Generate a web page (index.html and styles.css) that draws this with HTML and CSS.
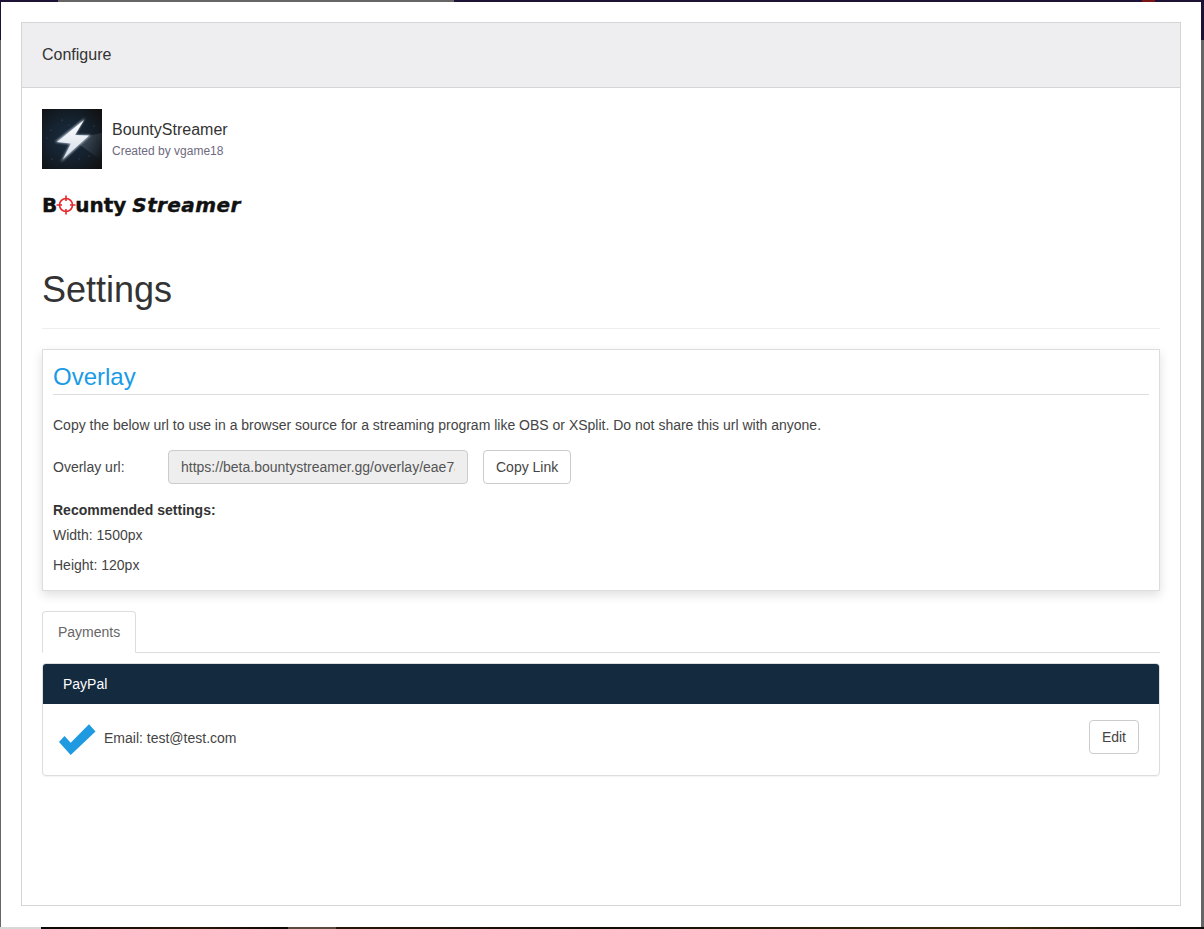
FILE: index.html
```html
<!DOCTYPE html>
<html lang="en">
<head>
  <meta charset="UTF-8" />
  <title>Configure</title>
  <link rel="stylesheet" href="styles.css">
</head>
<body>
  <div class="modal">
    <div class="config-panel">
      <div class="config-head">Configure</div>
      <div class="config-body">
        <!-- Extension info -->
        <div class="ext-info">
          <svg class="ext-icon" width="60" height="60" viewBox="0 0 60 60">
            <defs>
              <radialGradient id="sky" cx="0.45" cy="0.5" r="0.7">
                <stop offset="0" stop-color="#1c2e40" />
                <stop offset="0.55" stop-color="#14202c" />
                <stop offset="1" stop-color="#111111" />
              </radialGradient>
              <linearGradient id="beam" x1="0.4" y1="0.5" x2="1" y2="0.8">
                <stop offset="0" stop-color="#7d8790" stop-opacity="0.3" />
                <stop offset="1" stop-color="#7d8790" stop-opacity="0" />
              </linearGradient>
              <linearGradient id="bolt" x1="0" y1="0" x2="0" y2="1">
                <stop offset="0" stop-color="#ffffff" />
                <stop offset="1" stop-color="#d3dde6" />
              </linearGradient>
              <filter id="glow" x="-30%" y="-30%" width="160%" height="160%">
                <feGaussianBlur stdDeviation="1.200" />
              </filter>
            </defs>
            <rect width="60" height="60" fill="url(#sky)" />
            <path d="M30 30 L60 24 L60 52 Z" fill="url(#beam)" />
            <g fill="#4d5b68">
              <circle cx="20" cy="11" r="0.6" />
              <circle cx="9" cy="21" r="0.6" />
              <circle cx="27" cy="16" r="0.5" />
              <circle cx="52" cy="17" r="0.6" />
              <circle cx="5" cy="29" r="0.5" />
              <circle cx="10" cy="50" r="0.6" />
              <circle cx="47" cy="47" r="0.6" />
              <circle cx="37" cy="50" r="0.5" />
              <circle cx="48" cy="32" r="0.5" />
            </g>
            <path d="M43 9 L13 33 L28 35 L19 53 L49 26 L33 26 Z" fill="#aebccb" filter="url(#glow)" />
            <path d="M42 11 L15 33 L29 34.500 L21 50 L47 26.500 L33 26 Z" fill="url(#bolt)" />
          </svg>
          <div class="ext-text">
            <div class="ext-name">BountyStreamer</div>
            <div class="ext-author">Created by vgame18</div>
          </div>
        </div>

        <div class="logo">
          <span>B</span>
          <svg class="logo-target" width="20" height="20" viewBox="0 0 20 20">
            <circle cx="10" cy="10" r="6.500" fill="none" stroke="#e8262a" stroke-width="1.600" />
            <path d="M10 0.500V6M10 14V19.500M0.500 10H6M14 10H19.500" stroke="#e8262a" stroke-width="1.600" />
          </svg>
          <span>unty</span>
          <span class="logo-second">Streamer</span>
        </div>

        <h1 class="page-title">Settings</h1>

        <!-- Overlay box -->
        <section class="overlay-box">
          <h3 class="overlay-title">Overlay</h3>
          <p class="overlay-desc">Copy the below url to use in a browser source for a streaming program like OBS or XSplit. Do not share this url with anyone.</p>
          <div class="url-row">
            <label class="url-label" for="overlay-url">Overlay url:</label>
            <input class="url-input" id="overlay-url" type="text" disabled value="https://beta.bountystreamer.gg/overlay/eae7a1c04b">
            <button class="btn" type="button">Copy Link</button>
          </div>
          <div class="rec-title">Recommended settings:</div>
          <p class="rec-line">Width: 1500px</p>
          <p class="rec-line">Height: 120px</p>
        </section>

        <!-- Tabs -->
        <ul class="tabs">
          <li class="tab">Payments</li>
        </ul>

        <div class="pay-card">
          <div class="pay-head">PayPal</div>
          <div class="pay-body">
            <svg class="check" width="38" height="32" viewBox="0 0 38 32">
              <path d="M1 18 L6.500 12 L12.700 18.700 L31 0.300 L37.500 7.500 L12.700 31 Z" fill="#1f9ae0" />
            </svg>
            <span class="pay-email">Email: test@test.com</span>
            <button class="btn btn-edit" type="button">Edit</button>
          </div>
        </div>
      </div>
    </div>
  </div>
</body>
</html>
```

FILE: styles.css
```css
/* Base styles */
html, body {
  height: 100%;
}
body {
  margin: 0;
  overflow: hidden;
  font-family: "Liberation Sans", Arial, sans-serif;
  font-size: 14px;
  line-height: 20px;
  color: #444;
  /* what shows of the page behind the modal, along the window edges */
  background:
    linear-gradient(90deg, #1c1236 58px, #666 58px, #666 454px, #1c1236 454px, #1c1236 1142px, #7a1414 1142px, #7a1414 1155px, #1c1236 1155px) top / 100% 2px no-repeat,
    linear-gradient(90deg, #d8d8d8 41px, #0c0805 41px, #2a1608 200px, #0c0805 288px, #5a4a40 288px, #5a4a40 336px, #2a1608 336px, #100c06 600px, #3a2c08 1000px, #0c0805 1150px) bottom / 100% 2px no-repeat,
    linear-gradient(#1c1236 40px, #666 40px);
  padding: 2px 3px 2px 1px;
  box-sizing: border-box;
}
.modal {
  height: 100%;
  background: #fff;
  padding: 20px;
  box-sizing: border-box;
}
/* Configure panel */
.config-panel {
  height: 884px;
  border: 1px solid #d5d5d8;
  box-sizing: border-box;
}
.config-head {
  height: 65px;
  padding: 0 20px;
  line-height: 63px;
  font-size: 16px;
  color: #333;
  background: #eeeef0;
  border-bottom: 1px solid #d5d5d8;
  box-sizing: border-box;
}
.config-body {
  padding: 21px 20px 0;
}
/* Extension info */
.ext-info {
  display: flex;
  align-items: center;
  gap: 10px;
}
.ext-icon {
  display: block;
}
.ext-text {
  padding-top: 2px;
}
.ext-name {
  font-size: 16px;
  line-height: 20px;
  color: #333;
}
.ext-author {
  font-size: 12px;
  line-height: 20px;
  margin-top: 1px;
  color: #6e6a80;
}
.logo {
  display: flex;
  align-items: center;
  height: 24px;
  margin-top: 24px;
  font-family: "DejaVu Sans", sans-serif;
  font-weight: bold;
  font-size: 20px;
  color: #111;
  -webkit-text-stroke: 0.4px #111;
}
.logo-target {
  margin: 0 -1px;
}
.logo-second {
  margin-left: 6px;
  font-style: italic;
  letter-spacing: 0.4px;
}
.page-title {
  margin: 53px 0 0;
  padding-bottom: 18px;
  font-size: 36px;
  line-height: 40px;
  font-weight: 400;
  color: #333;
  border-bottom: 1px solid #eee;
}
/* Overlay box */
.overlay-box {
  margin-top: 20px;
  padding: 12px 10px 10px;
  height: 242px;
  box-sizing: border-box;
  border: 1px solid #ddd;
  box-shadow: 0 4px 10px rgba(0, 0, 0, 0.13);
}
.overlay-title {
  margin: 0;
  padding-bottom: 2px;
  font-size: 24px;
  line-height: 30px;
  font-weight: 400;
  color: #1a9be6;
  border-bottom: 1px solid #ddd;
}
.overlay-desc {
  margin: 20px 0 0;
}
.url-row {
  display: flex;
  align-items: center;
  margin-top: 15px;
}
.url-label {
  width: 115px;
}
.url-input {
  width: 300px;
  height: 34px;
  padding: 6px 12px;
  box-sizing: border-box;
  font: inherit;
  color: #555;
  background: #eee;
  border: 1px solid #ccc;
  border-radius: 4px;
}
.btn {
  height: 34px;
  padding: 6px 12px;
  font: inherit;
  color: #444;
  background: #fff;
  border: 1px solid #ccc;
  border-radius: 4px;
  cursor: pointer;
}
.url-row .btn {
  margin-left: 15px;
}
.rec-title {
  margin-top: 16px;
  font-weight: bold;
  color: #333;
}
.rec-line {
  margin: 5px 0 10px;
}
/* Tabs */
.tabs {
  display: flex;
  list-style: none;
  margin: 20px 0 0;
  padding: 0;
  border-bottom: 1px solid #ddd;
}
.tab {
  padding: 10px 15px;
  height: 42px;
  margin-bottom: -1px;
  box-sizing: border-box;
  color: #666;
  background: #fff;
  border: 1px solid #ddd;
  border-bottom-color: #fff;
  border-radius: 4px 4px 0 0;
}
/* PayPal card */
.pay-card {
  margin-top: 10px;
  border: 1px solid #ddd;
  border-radius: 4px;
  box-shadow: 0 1px 1px rgba(0, 0, 0, 0.05);
}
.pay-head {
  height: 40px;
  padding: 0 20px;
  line-height: 40px;
  color: #fff;
  background: #142a3f;
  border-radius: 3px 3px 0 0;
}
.pay-body {
  display: flex;
  align-items: center;
  height: 71px;
  padding: 0 20px 0 15px;
}
.check {
  margin-top: 1px;
  margin-right: 8px;
}
.pay-email {
  margin-bottom: 3px;
}
.btn-edit {
  margin-left: auto;
  margin-bottom: 5px;
}
```
